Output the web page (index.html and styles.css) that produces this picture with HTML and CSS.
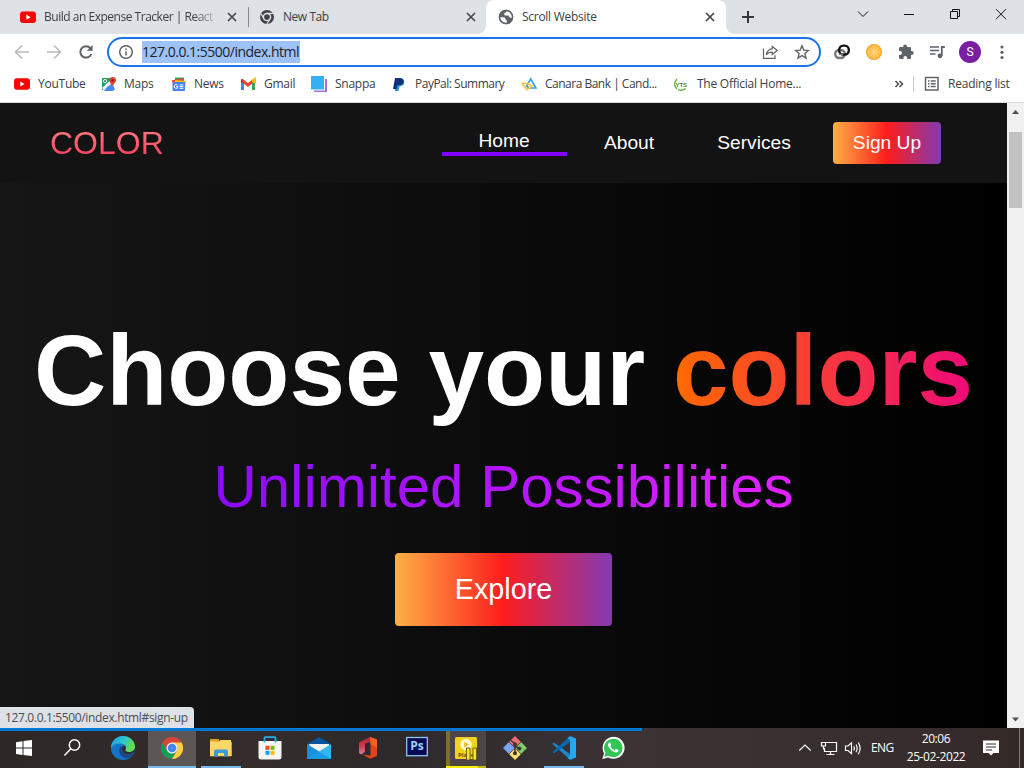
FILE: index.html
```html
<!DOCTYPE html>
<html lang="en">
<head>
<meta charset="utf-8">
<title>Scroll Website</title>
<link rel="stylesheet" href="styles.css">
</head>
<body>
<div class="tabs">
  <div class="tab tab-first">
    <svg width="16" height="16" viewBox="0 0 16 16"><rect y="2.500" width="16" height="11.500" rx="3" fill="#f00"/><path d="M6.300 5.600 10.700 8.200 6.300 10.700Z" fill="#fff"/></svg>
    <span class="tab-title fade">Build an Expense Tracker | React H</span>
    <svg class="x" width="16" height="16" viewBox="0 0 16 16"><path d="M4 4l8 8M12 4l-8 8"/></svg>
  </div>
  <div class="tab tab-second">
    <svg width="16" height="16" viewBox="0 0 16 16"><circle cx="8" cy="8" r="7" fill="#3f4246"/><circle cx="8" cy="8" r="3.600" fill="#3f4246" stroke="#dee1e6" stroke-width="1.500"/><path d="M8 4.400H14M4.900 9.800 2 4.600M11.100 9.800 8 15" stroke="#dee1e6" stroke-width="1.200"/></svg>
    <span class="tab-title">New Tab</span>
    <svg class="x" width="16" height="16" viewBox="0 0 16 16"><path d="M4 4l8 8M12 4l-8 8"/></svg>
  </div>
  <div class="tab tab-active">
    <svg width="16" height="16" viewBox="0 0 16 16"><circle cx="8" cy="8" r="7.200" fill="#5f6368"/><path d="M1.500 8.200H5.500Q7.500 8.500 7.400 10 7.300 11 8.800 11.200V14.500Q3 14.500 1.500 8.200ZM8.800 1.500Q8.600 3.800 6.300 4.200 5.600 6.600 8 6.600H10.500Q11.400 8.900 13.500 9.200L14.500 7Q13.800 2.500 8.800 1.500Z" fill="#fff"/><circle cx="8" cy="8" r="6.500" fill="none" stroke="#5f6368" stroke-width="1.500"/></svg>
    <span class="tab-title title-active">Scroll Website</span>
    <svg class="x" width="16" height="16" viewBox="0 0 16 16"><path d="M4 4l8 8M12 4l-8 8"/></svg>
  </div>
  <svg class="plus" width="16" height="16" viewBox="0 0 16 16"><path d="M8 2v12M2 8h12"/></svg>
  <div class="win">
    <svg width="46" height="28" viewBox="0 0 46 28"><path d="M18 11.500 23 16.500 28 11.500"/></svg>
    <svg width="46" height="28" viewBox="0 0 46 28"><path d="M18 14.500H28"/></svg>
    <svg width="46" height="28" viewBox="0 0 46 28"><path d="M18.500 11.500h7v7h-7zM20.500 11.500v-2h7v7h-2"/></svg>
    <svg width="46" height="28" viewBox="0 0 46 28"><path d="M18 9.200 28 19.200M28 9.200 18 19.200"/></svg>
  </div>
</div>

<div class="toolbar">
  <svg class="nav-ic off" width="16" height="16" viewBox="0 0 16 16"><path d="M15 8H2M8 1.500 1.500 8 8 14.500"/></svg>
  <svg class="nav-ic off" width="16" height="16" viewBox="0 0 16 16"><path d="M1 8H14M8 1.500 14.500 8 8 14.500"/></svg>
  <svg class="nav-ic" width="16" height="16" viewBox="0 0 16 16"><path d="M13.300 10A5.700 5.700 0 1 1 12.200 4" /><path d="M14.600 1v5.800H8.800Z" fill="#5f6368" stroke="none"/></svg>
  <div class="omnibox">
    <svg width="16" height="16" viewBox="0 0 16 16" fill="none" stroke="#5f6368" stroke-width="1.500"><circle cx="8" cy="8" r="6.300"/><path d="M8 7.200v4.300M8 4.500v1.500"/></svg>
    <span class="url">127.0.0.1:5500/index.html</span>
    <svg class="share" width="16" height="16" viewBox="0 0 16 16" fill="none" stroke="#5f6368" stroke-width="1.200"><path d="M1.500 4.500v9.800h11.500v-3"/><path d="M10.200 2.500 15.200 6.500 10.200 10.500V8.200C7.500 8.200 5.600 9 4.200 10.800 4.800 7.800 6.500 5.200 10.200 4.800Z"/></svg>
    <svg width="16" height="16" viewBox="0 0 16 16" fill="none" stroke="#5f6368" stroke-width="1.400"><path d="M8 1.800 9.800 6.100 14.400 6.500 10.900 9.500 12 14 8 11.600 4 14 5.100 9.500 1.600 6.500 6.200 6.100Z"/></svg>
  </div>
  <div class="exts">
    <svg width="18" height="18" viewBox="0 0 18 18" fill="none" stroke-width="2.400"><rect x="2.200" y="7" width="9.600" height="8" rx="4" stroke="#777"/><rect x="6.200" y="2.600" width="9.600" height="9" rx="4.200" stroke="#111"/><path d="M6 11.200h4" stroke="#777" stroke-width="1.600"/></svg>
    <svg width="18" height="18" viewBox="0 0 18 18"><circle cx="9" cy="9" r="8" fill="#f7a52b"/><circle cx="9" cy="9" r="6.700" fill="#ffbd42"/><path d="M9 2.500v13M2.500 9h13M4.400 4.400l9.200 9.200M13.600 4.400l-9.200 9.200" stroke="#ffe09a" stroke-width=".8"/></svg>
    <svg width="18" height="18" viewBox="0 0 18 18"><path fill="#5f6368" d="M2 5.200Q2 4 3.200 4H6.200V3.300A1.900 1.900 0 0 1 10 3.300V4H12.800Q14 4 14 5.200V8H14.800A1.900 1.900 0 0 1 14.800 11.800H14V14.800Q14 16 12.800 16H10.200V15A1.900 1.900 0 0 0 6.400 15V16H3.200Q2 16 2 14.800V12H3A1.900 1.900 0 0 0 3 8.100H2Z"/></svg>
    <svg width="18" height="18" viewBox="0 0 18 18"><path d="M2 4h9M2 7.500h9M2 11h5.500" stroke="#5f6368" stroke-width="1.600"/><path d="M13.800 13V4h3" fill="none" stroke="#5f6368" stroke-width="1.800"/><circle cx="12" cy="12.800" r="2.400" fill="#5f6368"/></svg>
    <span class="avatar">S</span>
    <svg width="18" height="18" viewBox="0 0 18 18" fill="#5f6368"><circle cx="9" cy="4" r="1.600"/><circle cx="9" cy="9.300" r="1.600"/><circle cx="9" cy="14.500" r="1.600"/></svg>
  </div>
</div>

<div class="bookmarks">
  <div class="bm"><svg width="16" height="16" viewBox="0 0 16 16"><rect y="2.300" width="16" height="11.500" rx="3" fill="#f00"/><path d="M6.300 5.500 10.700 8 6.300 10.500Z" fill="#fff"/></svg><span>YouTube</span></div>
  <div class="bm bm-tight"><svg width="16" height="16" viewBox="0 0 16 16"><path d="M1 2h11v12H1z" fill="#1fa463"/><path d="M2 14 11 6l3 8Z" fill="#4a89f3"/><path d="M1 12 10 3.500 12 6 3 14.500Z" fill="#f5f5f5"/><path d="M7 10l6 5H3Z" fill="#4285f4"/><circle cx="4" cy="5" r="1.600" fill="none" stroke="#fff"/><path d="M11.500 1A3.400 3.400 0 0 0 8.200 4.400C8.200 7 11.500 8 11.500 11 11.500 8 15 7 15 4.400A3.400 3.400 0 0 0 11.500 1Z" fill="#e94335"/><circle cx="11.600" cy="4.400" r="1.200" fill="#811411"/></svg><span>Maps</span></div>
  <div class="bm bm-tight"><svg width="16" height="16" viewBox="0 0 16 16"><path d="M4 1.500h9v6H4z" fill="#34a853"/><path d="M.8 4.200l11-2 1 6H2Z" fill="#ea4335"/><path d="M4 4l11 1-1 7H3Z" fill="#fbbc04"/><rect x="1.500" y="6" width="12.500" height="9" rx="1" fill="#4285f4"/><path d="M6.500 9.200A1.900 1.900 0 1 0 7 10.600H5.300M8.700 9h3.600M8.700 10.700h3.600M8.700 12.400h3.600" fill="none" stroke="#fff"/></svg><span>News</span></div>
  <div class="bm"><svg width="16" height="16" viewBox="0 0 16 16" fill="none" stroke-width="3"><path d="M2.500 4v10" stroke="#4285f4"/><path d="M13.500 4v10" stroke="#34a853"/><path d="M1.500 4 8 9 14.500 4" stroke="#ea4335"/><path d="M12.200 5.700 14.500 4v3" stroke="#fbbc04"/><path d="M1.700 3.200v4" stroke="#c5221f" stroke-width="1.400"/></svg><span>Gmail</span></div>
  <div class="bm"><svg width="16" height="16" viewBox="0 0 16 16"><path d="M3 3h13v13H3z" fill="#a66be0"/><path d="M0 0h14v14.500H0z" fill="#fff"/><path d="M0 0h13v13.500H0z" fill="#33b1f4"/></svg><span>Snappa</span></div>
  <div class="bm bm-narrow"><svg width="16" height="16" viewBox="0 0 16 16"><path d="M5 4h7c2 1 2 6-3.500 6.500L7.500 15H4Z" fill="#2790d0"/><path d="M4 2h5.500c5 .3 4 7-1 7.200H6.300L5.500 13H2Z" fill="#12307c"/></svg><span>PayPal: Summary</span></div>
  <div class="bm bm-narrow"><svg width="16" height="16" viewBox="0 0 16 16" fill="none" stroke-width="1.700"><path d="M5.500 10 9.700 3 15 12H8Z" stroke="#32a7df"/><path d="M1 7.500H7L11 10 6 13.500Z" stroke="#f5c34a"/></svg><span>Canara Bank | Cand...</span></div>
  <div class="bm"><svg width="16" height="16" viewBox="0 0 16 16"><path d="M4 3A6.500 6.500 0 0 0 4 13M5 13.600q4 1.500 7.500-.9" fill="none" stroke="#66b53b" stroke-width="1.400"/><text x="2.500" y="10.500" class="yts">YTS</text></svg><span>The Official Home...</span></div>
  <svg class="more" width="10" height="16" viewBox="0 0 10 16"><path d="M1.500 5 4.500 8 1.500 11M5.500 5l3 3-3 3"/></svg>
  <div class="reading"><svg width="16" height="16" viewBox="0 0 16 16" fill="none" stroke="#5f6368" stroke-width="1.500"><rect x="1.500" y="1.500" width="12.500" height="12.500"/><path d="M4 5h1.500M4 7.800h1.500M4 10.600h1.500M6.700 5h5M6.700 7.800h5M6.700 10.600h5"/></svg><span>Reading list</span></div>
</div>

<div class="viewport">
  <div class="site">
    <nav class="navbar">
      <a class="logo">COLOR</a>
      <div class="menu">
        <a class="link current">Home</a><a class="link">About</a><a class="link">Services</a><a class="button">Sign Up</a>
      </div>
    </nav>
    <main class="hero">
      <h1>Choose your <span>colors</span></h1>
      <p>Unlimited Possibilities</p>
      <a class="explore">Explore</a>
    </main>
    <div class="status">127.0.0.1:5500/index.html#sign-up</div>
  </div>
  <div class="scroll">
    <svg width="17" height="17" viewBox="0 0 17 17"><path d="M5 11 8.500 7 12 11Z" fill="#505050"/></svg>
    <div class="thumb"></div>
    <svg class="down" width="17" height="17" viewBox="0 0 17 17"><path d="M5 6.500 8.500 10.500 12 6.500Z" fill="#505050"/></svg>
  </div>
</div>

<div class="taskbar">
  <div class="apps">
    <div class="app"><svg width="24" height="24" viewBox="0 0 24 24" fill="#fff"><path d="M4 6.200 10.500 5.200V11.500H4ZM11.500 5 20 4V11.500H11.500ZM4 12.500H10.500V18.900L4 18ZM11.500 12.500H20V20L11.500 19Z"/></svg></div>
    <div class="app"><svg width="24" height="24" viewBox="0 0 24 24" fill="none" stroke="#fff" stroke-width="1.500"><circle cx="13.500" cy="9" r="5.200"/><path d="M9.800 12.800 3.500 19.500"/></svg></div>
    <div class="app"><svg width="24" height="24" viewBox="0 0 24 24"><defs><linearGradient id="eg" x1="0" y1="0" x2="1" y2=".3"><stop offset="0" stop-color="#249fe0"/><stop offset=".55" stop-color="#2bc3d2"/><stop offset="1" stop-color="#68dc48"/></linearGradient></defs><circle cx="12" cy="12" r="12" fill="#1673c8"/><path d="M0 12C0 5 5.500 0 12 0S24 5 24 10.500C24 14.500 20.500 16 17.500 16S13.800 14.500 14.500 13.500C16.500 10 13 7.500 9 7.500 4.500 7.500 1.500 9.500 0 12Z" fill="url(#eg)"/><path d="M11.500 9.500C6 11.500 7 21 16 22.500 19 21.500 21.500 19.500 22.500 17.500 18 19.800 11 18.500 10.500 13 10.400 11.500 10.900 10.200 11.500 9.500Z" fill="#154884"/><path d="M13.500 9.500C11 10 10.300 13 11.600 15.500 13.500 18.500 18 19 22 17L24 15V17L24 13C22 16 19 16.500 17 16 14.500 15.600 13.800 14.500 14.500 13.500 15.200 12 14.800 10.500 13.500 9.500Z" fill="#302a2a"/></svg></div>
    <div class="app on"><svg width="24" height="24" viewBox="0 0 24 24"><circle cx="12" cy="12" r="11" fill="#db4437"/><path d="M2.500 6.500A11 11 0 0 0 12 23L16.800 14.800 12 17 7.300 14.700Z" fill="#0f9d58"/><path d="M12 6.500H21.600A11 11 0 0 1 12 23L16.800 14.800 17.500 12Z" fill="#ffcd40"/><circle cx="12" cy="12" r="5.500" fill="#f1f1f1"/><circle cx="12" cy="12" r="4.300" fill="#4285f4"/></svg></div>
    <div class="app run"><svg width="24" height="24" viewBox="0 0 24 24"><path d="M1 3h9v3h13v14H1z" fill="#e0a11d"/><path d="M1 5.500h9l1.500-1.500H22v16.300H1z" fill="#ffd766"/><path d="M5 20.500v-5q0-2 2-2h10q2 0 2 2v5h-4V17H9v3.500Z" fill="#3e99d9"/></svg></div>
    <div class="app"><svg width="24" height="24" viewBox="0 0 24 24"><path d="M.5 5h23v16q0 2.500-2.500 2.500H3Q.5 23.500.5 21Z" fill="#f5f5f5"/><path d="M6.500 6.500V2q0-.8.800-.8h9.400q.8 0 .8.800v4.500" fill="none" stroke="#29a9e8" stroke-width="1.800"/><path d="M7.500 9.800h4v4h-4z" fill="#f25022"/><path d="M12.500 9.800h4v4h-4z" fill="#7fba00"/><path d="M7.500 14.800h4v4h-4z" fill="#00a4ef"/><path d="M12.500 14.800h4v4h-4z" fill="#ffb900"/></svg></div>
    <div class="app"><svg width="24" height="24" viewBox="0 0 24 24"><path d="M0 8 12 1 24 8 20 15H4Z" fill="#07559f"/><path d="M2 8h20v6L12 17 3 12Z" fill="#f2f2f2"/><path d="M0 8 14.500 17 24 23H0Z" fill="#1791dd"/><path d="M24 8 12 15.500 0 23H24Z" fill="#33b5f0"/><path d="M12 15.500 24 23H0L12 15.500Z" fill="#189be5"/></svg></div>
    <div class="app"><svg width="24" height="24" viewBox="0 0 24 24"><defs><linearGradient id="of" x1="0" y1="0" x2="0" y2="1"><stop offset="0" stop-color="#b51f39"/><stop offset=".55" stop-color="#d73a4d"/><stop offset="1" stop-color="#cf87a8"/></linearGradient></defs><path d="M3 6.500 14 1v5L9 7.500V15.500L5.500 18.500 3 17Z" fill="url(#of)"/><path d="M13.500 1 21 3.500V20L14 22.800 6.500 18.500 14.500 19.500V5.500Z" fill="#e0431b"/><path d="M14 1 21 3.500V12L14.500 8Z" fill="#f26322"/></svg></div>
    <div class="app"><svg width="24" height="24" viewBox="0 0 24 24"><rect x="1.700" y="1.500" width="20.600" height="18.200" fill="#080b50" stroke="#8bc5f8" stroke-width="1.300"/><text x="5.300" y="14.200" class="ps">Ps</text></svg></div>
    <div class="app player"><svg width="24" height="24" viewBox="0 0 24 24"><rect x="1" y="1" width="22" height="22" rx="1.500" fill="#f1d31b"/><circle cx="12" cy="8.500" r="5.800" fill="#fff8d0"/><path d="M10.300 5.800 15 8.500 10.300 11.500Z" fill="#e1bd13"/><text x="4" y="21.300" class="play">Player</text><path d="M12.500 12h3.500v12h-3.500zM19 12h3.500v12H19z" fill="#ffe52a" stroke="#6c6210"/></svg></div>
    <div class="app"><svg width="24" height="24" viewBox="0 0 24 24"><path d="M12 0 18 6 12 11.500 6 6Z" fill="#f16e75"/><path d="M0 12 6 6 12 12 6 18Z" fill="#78a5ed"/><path d="M24 12 18 6 12 12 18 18Z" fill="#80ca67"/><path d="M12 24 6 18 12 12 18 18Z" fill="#ffe06b"/><path d="M8 4.500 12 8V18M12 9.500 16 13" fill="none" stroke="#3c3335" stroke-width="1.500"/><g fill="#3c3335"><circle cx="12" cy="8.300" r="2"/><circle cx="12" cy="17.200" r="2"/><circle cx="16.300" cy="12.500" r="2"/></g><path d="M6 6 12 12M6 18l12-12M12 12l6 6" stroke="#3c3335" stroke-width=".7"/></svg></div>
    <div class="app run"><svg width="24" height="24" viewBox="0 0 24 24"><path d="M.3 8 2 6.500 18 18V23.500Z" fill="#1b86ca"/><path d="M.3 16 2 17.500 18 6V.3Z" fill="#0069ac"/><path d="M18 0 24 2.500V21.500L18 24 15.500 21.500 18 20V4L15.500 2.500Z" fill="#25a7f0"/></svg></div>
    <div class="app"><svg width="24" height="24" viewBox="0 0 24 24"><path d="M1.300 23 3 17.200A11 11 0 1 1 7.200 21.400Z" fill="#fff"/><path d="M3.200 21 4.500 16.900A9.200 9.200 0 1 1 7.500 19.800Z" fill="#31c653"/><path d="M8.600 6.500C7 7 6.300 9 8 11.500 10 14.500 13.500 17 15.500 16.400 17.200 16 17.700 14.500 17.300 14L14.800 12.700 13.500 14.200Q10.800 13 9.400 10.200L10.300 8.900 9.400 6.700Z" fill="#fff"/></svg></div>
  </div>
  <div class="tray">
    <svg width="18" height="20" viewBox="0 0 18 20"><path d="M3.300 12.500 9 7 14.700 12.500"/></svg>
    <svg width="18" height="20" viewBox="0 0 18 20"><path d="M5.500 4.500H16.500V13.500H4.500V10M10.500 13.500v3M6.500 16.500h8M1.500 4.500h4v3.500h-4zM3.500 8v3h1.500"/></svg>
    <svg width="18" height="20" viewBox="0 0 18 20"><path d="M1.500 8H4L7.500 4.800V15.700L4 12.500H1.500ZM9.700 8.300Q11 10.300 9.700 12.500M12 6.500Q14.400 10.300 12 14.300M14.300 4.500Q18 10.300 14.300 16.200"/></svg>
    <span class="lang">ENG</span>
    <div class="clock"><span>20:06</span><span>25-02-2022</span></div>
    <svg class="note" width="18" height="20" viewBox="0 0 18 20"><path d="M1 2.500H17V15H11.500L9 17.500 6.500 15H1Z" fill="#fff" stroke="none"/><path d="M4 6h10M4 9h10M4 12h6" stroke="#342c2c"/></svg>
    <i class="peek"></i>
  </div>
  <div class="progress"></div>
</div>
</body>
</html>
```
FILE: styles.css
```css
* { box-sizing: border-box; }
body { margin: 0; width: 1024px; height: 768px; overflow: hidden; display: flex; flex-direction: column; background: #fff; font: 12px/16px "Open Sans", "Noto Sans", sans-serif; color: #3c4043; }
svg { display: block; flex: none; }

.tabs { height: 34px; background: #dee1e6; display: flex; align-items: center; flex: none; }
.tab { height: 34px; display: flex; align-items: center; gap: 8px; flex: none; }
.tab-first { width: 248px; padding: 0 8px 0 20px; }
.tab-second { width: 238px; padding: 0 7px 0 11px; background: linear-gradient(#85888c, #85888c) 0 50% / 1px 20px no-repeat; }
.tab-active { width: 240px; padding: 0 8px 0 12px; background: #fff; border-radius: 8px 8px 0 0; position: relative; }
.tab-active::before, .tab-active::after { content: ""; position: absolute; bottom: 0; width: 8px; height: 8px; }
.tab-active::before { left: -8px; background: radial-gradient(circle at 0 0, transparent 7.500px, #fff 8px); }
.tab-active::after { right: -8px; background: radial-gradient(circle at 100% 0, transparent 7.500px, #fff 8px); }
.tab-title { flex: 1; min-width: 0; white-space: nowrap; letter-spacing: -.42px; }
.tab-second .tab-title { letter-spacing: -.45px; }
.title-active { letter-spacing: -.28px; }
.tab-title.fade { letter-spacing: -.48px; -webkit-mask-image: linear-gradient(to right, #000 150px, transparent 176px); mask-image: linear-gradient(to right, #000 150px, transparent 176px); }
.x { stroke: #45484c; stroke-width: 1.700; }
.plus { stroke: #35383b; stroke-width: 2; margin-left: 14px; }
.win { margin-left: auto; display: flex; height: 28px; align-self: flex-start; }
.win svg { fill: none; stroke: #111; stroke-width: 1; }

.toolbar { height: 36px; display: flex; align-items: center; padding-left: 14px; flex: none; }
.nav-ic { margin-right: 16px; fill: none; stroke: #5f6368; stroke-width: 2; }
.off { stroke: #babcbe; stroke-width: 1.700; }
.omnibox { margin-left: -3px; width: 714px; height: 30px; border: 2px solid #1a73e8; border-radius: 15px; display: flex; align-items: center; padding: 0 9px; }
.url { margin-left: 8px; width: 158px; height: 22px; background: #9cc2f7; font-size: 14px; line-height: 22px; color: #202124; white-space: nowrap; letter-spacing: -.5px; }
.share { margin-left: auto; margin-right: 16px; }
.exts { margin-left: 12px; display: grid; grid-template-columns: 32px 32px 31px 27px 38px 18px; align-items: center; }
.avatar { width: 22px; height: 22px; margin-left: 4px; border-radius: 50%; background: #7b1fa2; color: #fff; text-align: center; font: 12px/22px Roboto, sans-serif; }

.bookmarks { height: 33px; flex: none; display: grid; grid-template-columns: 87px 70px 69px 71px 80px 130px 152px 221px 18px 1fr; padding: 0 0 4px 14px; align-items: center; border-bottom: 1px solid #dadce0; }
.bm { display: flex; align-items: center; gap: 8px; white-space: nowrap; letter-spacing: -.25px; }
.bm-tight { gap: 7px; }
.bm-narrow { letter-spacing: -.5px; }
.yts { font: bold 6px "Liberation Sans", sans-serif; fill: #3d8b25; letter-spacing: -.1px; }
.more { fill: none; stroke: #4a4d50; stroke-width: 1.500; }
.reading { height: 16px; border-left: 1px solid #c9cbce; padding-left: 10px; display: flex; gap: 8px; margin-left: 1px; white-space: nowrap; letter-spacing: -.22px; }

.viewport { height: 625px; flex: none; display: flex; }
.site { width: 1007px; position: relative; display: flex; flex-direction: column; font-family: "Liberation Sans", Arial, sans-serif; }
.navbar { height: 80px; flex: none; background: #131313; display: flex; align-items: center; justify-content: space-between; padding: 0 66px 0 50px; }
.logo { height: 80px; line-height: 80px; font-size: 32px; color: transparent; background: linear-gradient(to top, #ff0844 0%, #ffb199 100%); -webkit-background-clip: text; background-clip: text; }
.menu { display: flex; align-items: center; font-size: 19.200px; line-height: 22px; color: #fff; }
.link { width: 125px; text-align: center; padding-right: 1px; }
.current { border-bottom: 4px solid #8400ff; }
.button { margin-left: 16px; padding: 10px 0; width: 108px; text-align: center; border-radius: 4px; background: linear-gradient(to right, #fcb045 0%, #fd1d1d 50%, #833ab4 100%); }
.hero { flex: 1; background: linear-gradient(to right, #161616, #000); display: flex; flex-direction: column; align-items: center; color: #fff; padding-top: 130px; }
h1 { margin: 0; font-size: 100px; line-height: 115px; white-space: nowrap; }
h1 span { color: transparent; background: linear-gradient(to left, #ee0979, #ff6a00); -webkit-background-clip: text; background-clip: text; }
.hero p { margin: 24px 0 0; font-size: 60px; line-height: 69px; color: transparent; background: linear-gradient(to right, #8a0bff, #b414ff 50%, #e322ff); -webkit-background-clip: text; background-clip: text; }
.explore { margin-top: 32px; padding: 20px 60px; font-size: 28.800px; line-height: 33px; border-radius: 4px; background: linear-gradient(to right, #fcb045 0%, #fd1d1d 50%, #833ab4 100%); }
.status { position: absolute; left: 0; bottom: 0; width: 194px; height: 21px; padding-left: 5px; background: #dee1e6; border-top-right-radius: 4px; font: 12px/21px "Open Sans", sans-serif; color: #4a4d51; white-space: nowrap; letter-spacing: -.35px; }
.scroll { width: 17px; background: #f1f1f1; display: flex; flex-direction: column; }
.thumb { width: 13px; height: 76px; margin: 12px 2px 0; background: #c1c1c1; }
.down { margin-top: auto; }

.taskbar { height: 40px; flex: none; position: relative; display: flex; justify-content: space-between; background: linear-gradient(to right, #2d2725, #342d2c 25%, #2d292a 38%, #3c3335 62%, #382f2f 80%, #332a28); color: #fff; }
.apps { display: grid; grid-template-columns: 48px 48px 49px repeat(10, 48px); gap: 1px; }
.app { display: flex; align-items: center; justify-content: center; }
.on { background: #5c5655; border-bottom: 2px solid #76b9ed; padding-top: 2px; }
.run { background: linear-gradient(#76b9ed, #76b9ed) 50% 100% / 40px 2px no-repeat; }
.player { background: linear-gradient(#fff100, #fff100) 4px 100% / 32px 2px no-repeat, linear-gradient(#c8b900, #c8b900) 36px 100% / 8px 2px no-repeat, linear-gradient(#7b702e, #7b702e) 4px 0 / 4px 40px no-repeat, linear-gradient(#4d4646, #4d4646) 8px 0 / 36px 40px no-repeat; }
.ps { font: bold 12px "Open Sans", sans-serif; fill: #9bd0ff; }
.play { font: bold 6px "Open Sans", sans-serif; fill: #5e520b; }
.tray { display: flex; align-items: center; width: 228px; }
.tray svg { fill: none; stroke: #fff; stroke-width: 1.200; margin-right: 6px; }
.lang { width: 24px; margin-left: 3px; letter-spacing: -.6px; }
.clock { width: 60px; margin-left: 11px; display: flex; flex-direction: column; align-items: center; line-height: 18px; letter-spacing: -.4px; }
.tray .note { margin: 0 0 0 16px; }
.peek { width: 1px; height: 40px; background: #81797a; margin-left: 19px; }
.progress { position: absolute; left: 0; top: 0; width: 642px; height: 3px; background: #0078d4; }
```
